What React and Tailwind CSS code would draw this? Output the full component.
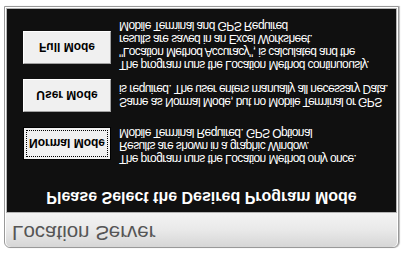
import React from 'react';

const modes = [
  {
    label: 'Normal Mode',
    isDefault: true,
    rowClass: 'mt-[24px]',
    btnClass: 'mt-[5px]',
    textClass: 'mt-0',
    lines: [
      'The program runs the Location Method only once.',
      'Results are shown in a graphic Window.',
      'Mobile Terminal Required. GPS Optional',
    ],
  },
  {
    label: 'User Mode',
    rowClass: 'mt-[14px]',
    btnClass: 'mt-0',
    textClass: 'mt-[4px]',
    lines: [
      'Same as Normal Mode, but no Mobile Terminal or GPS',
      'is required. The user enters manually all necessary Data.',
    ],
  },
  {
    label: 'Full Mode',
    rowClass: 'mt-[8px]',
    btnClass: 'mt-[7px]',
    textClass: 'mt-0',
    lines: [
      'The program runs the Location Method continuously.',
      '"Location Method Accuracy", is calculated and the',
      'results are saved in an Excel Worksheet.',
      'Mobile Terminal and GPS Required',
    ],
  },
];

const ModeButton = ({ label, isDefault, className }) => (
  <button
    className={`${className} w-[88px] h-[33px] shrink-0 bg-[#f0f0f0] ${
      isDefault
        ? 'border border-black p-[2px]'
        : 'border border-t-[#a0a0a0] border-r-[#a0a0a0] border-l-white border-b-white'
    } text-[12px] font-bold text-black leading-none`}
  >
    {isDefault ? (
      <span className="flex h-full w-full items-center justify-center border border-dotted border-black">
        {label}
      </span>
    ) : (
      label
    )}
  </button>
);

export default function App() {
  return (
    <div className="w-[404px] h-[253px] bg-white overflow-hidden font-['Liberation_Sans',Arial,sans-serif]">
      {/* the whole screenshot is mirrored top to bottom */}
      <div className="w-full h-full -scale-y-100 pt-[5px] pl-[4px]">
        <div className="w-[395px] h-[242px] border border-[#999999] rounded-t-[6px] bg-white px-px pb-px flex flex-col shadow-[1px_0_1px_rgba(0,0,0,0.25)]">
          <div className="h-[34px] shrink-0 rounded-t-[5px] bg-gradient-to-b from-[#d6d6d6] via-[#e9e9e9] to-[#f3f3f3] pt-[4px] pl-[6px]">
            <span className="text-[20.5px] leading-[20px] text-[#555555]">Location Server</span>
          </div>
          <div className="flex-1 border border-[#b4b4b4] bg-[#101010] flex flex-col">
            <h1 className="mt-[7px] text-center text-[16px] leading-[16px] font-bold text-white">
              Please Select the Desired Program Mode
            </h1>
            {modes.map((m) => (
              <div key={m.label} className={`${m.rowClass} flex items-start pl-[16px]`}>
                <ModeButton label={m.label} isDefault={m.isDefault} className={m.btnClass} />
                <div className={`${m.textClass} ml-[8px] text-[12px] leading-[13px] tracking-[-0.6px] text-white whitespace-nowrap`}>
                  {m.lines.map((l) => (
                    <p key={l}>{l}</p>
                  ))}
                </div>
              </div>
            ))}
          </div>
        </div>
      </div>
    </div>
  );
}
